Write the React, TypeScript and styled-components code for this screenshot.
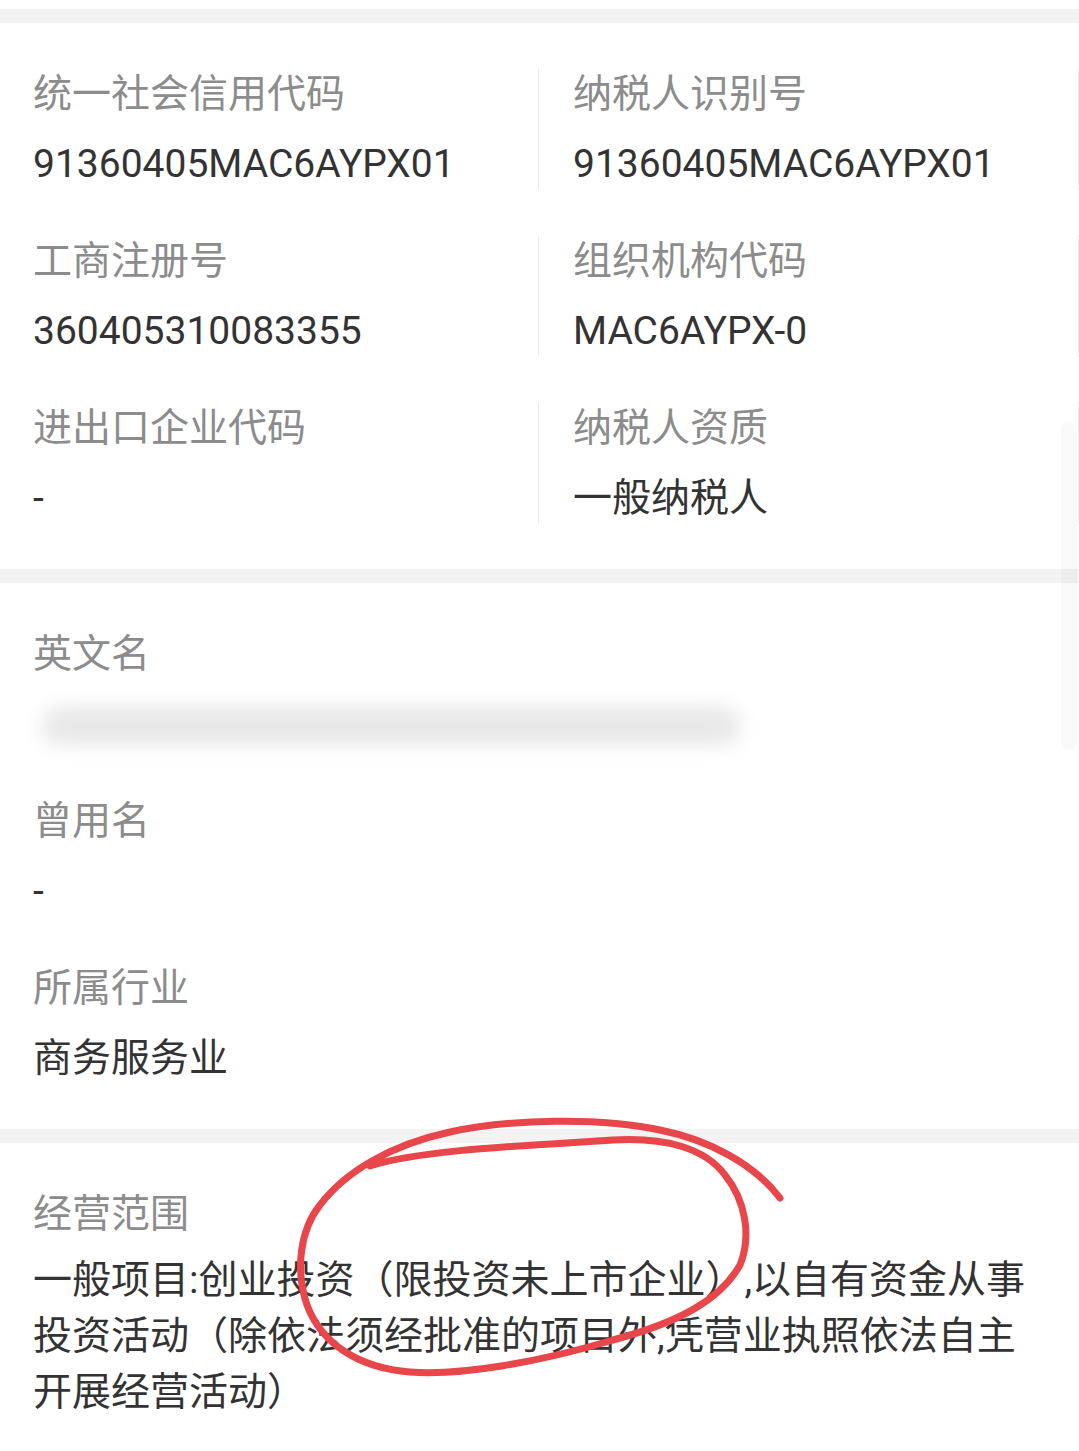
import React from 'react';
import styled, { createGlobalStyle } from 'styled-components';

const codes = [
  { label: '统一社会信用代码', value: '91360405MAC6AYPX01' },
  { label: '纳税人识别号', value: '91360405MAC6AYPX01' },
  { label: '工商注册号', value: '360405310083355' },
  { label: '组织机构代码', value: 'MAC6AYPX-0' },
  { label: '进出口企业代码', value: '-' },
  { label: '纳税人资质', value: '一般纳税人' },
];

const names = [
  { label: '英文名', value: null },
  { label: '曾用名', value: '-' },
  { label: '所属行业', value: '商务服务业' },
];

const scope =
  '一般项目:创业投资（限投资未上市企业）,以自有资金从事投资活动（除依法须经批准的项目外,凭营业执照依法自主开展经营活动）';

// hand drawn circle from the screenshot
const circlePath =
  'M 370 1166 C 420 1150, 520 1146, 613 1140 C 665 1137, 705 1148, 725 1175 ' +
  'C 745 1200, 752 1235, 740 1265 C 720 1300, 680 1322, 613 1340 ' +
  'C 540 1362, 460 1376, 410 1372 C 360 1368, 322 1345, 307 1305 ' +
  'C 295 1270, 300 1230, 320 1205 C 345 1172, 390 1145, 450 1132 ' +
  'C 510 1119, 600 1117, 660 1130 C 710 1140, 755 1165, 780 1198';

export default function App() {
  return (
    <Page>
      <GlobalStyle />
      <Band />
      <Section>
        <Grid>
          {codes.map(({ label, value }, index) => (
            <Cell key={index} $right={index % 2 === 1}>
              <Label>{label}</Label>
              <Value>{value}</Value>
            </Cell>
          ))}
        </Grid>
      </Section>
      <Band />
      <Section>
        <List>
          {names.map(({ label, value }, index) => (
            <Item key={index}>
              <Label>{label}</Label>
              {value === null ? (
                <Value>
                  <Blurred />
                </Value>
              ) : (
                <Value>{value}</Value>
              )}
            </Item>
          ))}
        </List>
      </Section>
      <Band />
      <Section>
        <Item>
          <Label>经营范围</Label>
          <Paragraph>{scope}</Paragraph>
        </Item>
      </Section>
      <Scrollbar />
      <Marker width="1079" height="1451" viewBox="0 0 1079 1451">
        <path d={circlePath} fill="none" stroke="#e8464a" strokeWidth="7" strokeLinecap="round" strokeLinejoin="round" />
      </Marker>
    </Page>
  );
}

const GlobalStyle = createGlobalStyle`
  html, body {
    margin: 0;
    padding: 0;
    background: #fff;
  }
  body {
    font-family: Roboto, "Noto Sans CJK SC", sans-serif;
  }
`;

const Page = styled.div`
  position: relative;
  width: 1079px;
  min-height: 1451px;
  padding-top: 9px;
  background: #fff;
  overflow: hidden;
`;

const Band = styled.div`
  height: 14px;
  background: #f3f3f3;
`;

const Section = styled.div`
  padding: 45px 0 45px 33px;
`;

const Grid = styled.div`
  display: grid;
  grid-template-columns: 506px 1fr;
  row-gap: 45px;
`;

const Cell = styled.div<{ $right: boolean }>`
  display: flex;
  flex-direction: column;
  gap: 18px;
  border-right: 1px solid #eeeeee;
  padding-left: ${({ $right }) => ($right ? '34px' : '0')};
`;

const List = styled.div`
  display: flex;
  flex-direction: column;
  gap: 45px;
`;

const Item = styled.div`
  display: flex;
  flex-direction: column;
  gap: 18px;
`;

const Label = styled.div`
  font-size: 39px;
  line-height: 52px;
  color: #8c8c8c;
  white-space: nowrap;
`;

const Value = styled.div`
  position: relative;
  font-size: 39px;
  line-height: 52px;
  height: 52px;
  color: #333333;
  white-space: nowrap;
`;

const Blurred = styled.div`
  position: absolute;
  left: 8px;
  top: 8px;
  width: 700px;
  height: 40px;
  border-radius: 20px;
  background: #e9e9e9;
  filter: blur(9px);
`;

const Paragraph = styled.div`
  width: 1011px;
  font-size: 39px;
  line-height: 56px;
  color: #333333;
  margin-top: -6px;
`;

const Scrollbar = styled.div`
  position: absolute;
  right: 2px;
  top: 423px;
  width: 16px;
  height: 327px;
  border-radius: 8px;
  background: rgba(0, 0, 0, 0.022);
`;

const Marker = styled.svg`
  position: absolute;
  left: 0;
  top: 0;
  pointer-events: none;
`;
